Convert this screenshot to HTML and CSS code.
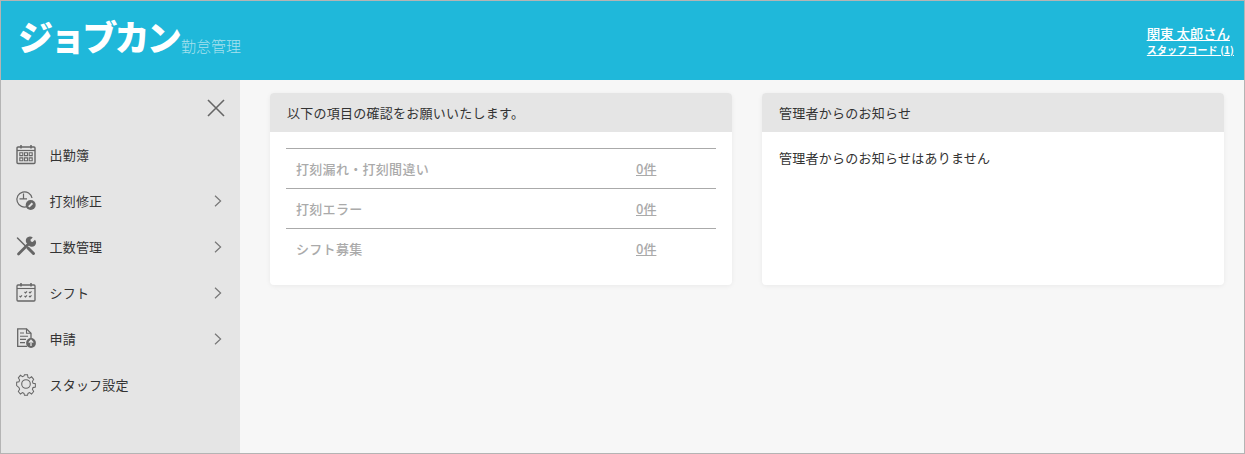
FILE: index.html
```html
<!DOCTYPE html>
<html lang="ja">
<head>
<meta charset="utf-8">
<title>ジョブカン勤怠管理</title>
<link rel="stylesheet" href="styles.css">
</head>
<body>
<div class="frame">
  <header class="topbar">
    <div class="brand"><span class="logo">ジョブカン</span><span class="product">勤怠管理</span></div>
    <div class="user">
      <a class="user-name" href="#">関東 太郎さん</a>
      <a class="user-code" href="#">スタッフコード (1)</a>
    </div>
  </header>
  <div class="body">
    <nav class="sidebar">
      <div class="close-row">
        <svg class="close" width="18" height="18" viewBox="0 0 18 18"><path d="M1 1L17 17M17 1L1 17" stroke="#666" stroke-width="1.6" fill="none"/></svg>
      </div>
      <ul class="menu">
        <li class="item">
          <svg class="icon" viewBox="0 0 20 20" fill="none" stroke="#666"><rect x="1" y="3" width="18" height="16.500" rx="1" stroke-width="1.400"/><path d="M1 6.500h18" stroke-width="1.200"/><path d="M5 1v3.500M15 1v3.500" stroke-width="1.500"/><path d="M3.800 8.800h3v2.800h-3zM8.500 8.800h3v2.800h-3zM13.200 8.800h3v2.800h-3zM3.800 13.900h3v2.800h-3zM8.500 13.900h3v2.800h-3zM13.200 13.900h3v2.800h-3z" stroke-width="1.100"/></svg>
          <span class="label">出勤簿</span>
        </li>
        <li class="item">
          <svg class="icon" viewBox="0 0 20 20" fill="none" stroke="#666"><path d="M11.500 16.400A7.600 7.600 0 1 1 16 8" stroke-width="1.200"/><path d="M7.500 3.500v5.300M3.500 8.800H11" stroke-width="1.200"/><circle cx="14.700" cy="15" r="5" fill="#666" stroke="none"/><path d="M12.800 16.900l3.600-3.600" stroke="#e5e5e5" stroke-width="2"/></svg>
          <span class="label">打刻修正</span>
          <svg class="chevron" width="8" height="12" viewBox="0 0 8 12"><path d="M1 .8L6.600 6 1 11.200" stroke="#777" stroke-width="1.200" fill="none"/></svg>
        </li>
        <li class="item">
          <svg class="icon" viewBox="0 0 20 20" fill="none" stroke="#666"><path d="M1.500 2L10 10.500" stroke-width="1.500" stroke-linecap="round"/><path d="M12 12L17.500 17.500" stroke-width="3" stroke-linecap="round"/><path d="M2.500 18L12 8.500" stroke-width="2.800" stroke-linecap="round"/><path d="M11.200 7.800A3.800 3.800 0 0 1 16.800 1.500l-2.400 2.300.5 1.600 1.700.5L19 3.700A3.800 3.800 0 0 1 12.800 9.400z" fill="#666" stroke="none"/></svg>
          <span class="label">工数管理</span>
          <svg class="chevron" width="8" height="12" viewBox="0 0 8 12"><path d="M1 .8L6.600 6 1 11.200" stroke="#777" stroke-width="1.200" fill="none"/></svg>
        </li>
        <li class="item">
          <svg class="icon" viewBox="0 0 20 20" fill="none" stroke="#666"><rect x="1" y="3" width="18" height="16" rx="1" stroke-width="1.300"/><path d="M1 6.500h18" stroke-width="1.100"/><path d="M5 1v3.500M15 1v3.500" stroke-width="1.500"/><path d="M8.500 10l1 1 1.500-1.600M13 10l1 1 1.500-1.600M3.500 14l1 1 1.500-1.600M8.500 14l1 1 1.500-1.600M13 14l1 1 1.500-1.600" stroke-width="1.100"/></svg>
          <span class="label">シフト</span>
          <svg class="chevron" width="8" height="12" viewBox="0 0 8 12"><path d="M1 .8L6.600 6 1 11.200" stroke="#777" stroke-width="1.200" fill="none"/></svg>
        </li>
        <li class="item">
          <svg class="icon" viewBox="0 0 20 20" fill="none" stroke="#666"><path d="M11 18.300H1.700V.8H10.500L15 5.300V10" stroke-width="1.300"/><path d="M10.500.8V5.300H15" stroke-width="1.100"/><path d="M4 5h4M4 8.200h8M4 11.400h6M4 14.600h5" stroke-width="1.100"/><circle cx="15" cy="15" r="4.900" fill="#666" stroke="none"/><path d="M15 18v-5.500M12.800 14.600L15 12.300l2.200 2.300" stroke="#e5e5e5" stroke-width="1.300"/></svg>
          <span class="label">申請</span>
          <svg class="chevron" width="8" height="12" viewBox="0 0 8 12"><path d="M1 .8L6.600 6 1 11.200" stroke="#777" stroke-width="1.200" fill="none"/></svg>
        </li>
        <li class="item">
          <svg class="icon" viewBox="0 0 20 20" fill="none" stroke="#666" stroke-width="1.100"><path d="M8.300.8h3.400l.5 2.600 1.700.8 2.300-1.400 2.300 2.500-1.400 2.200.7 1.700 2.600.5v3.400l-2.600.5-.7 1.700 1.400 2.200-2.300 2.500-2.300-1.400-1.700.8-.5 1.900H8.300l-.5-1.900-1.700-.8-2.300 1.400-2.300-2.500 1.400-2.200-.7-1.700L-.4 11.600V8.200l2.600-.5.700-1.700-1.400-2.200L3.800 1.300l2.300 1.400 1.700-.8z" transform="translate(1 0) scale(.9 1)"/><circle cx="10" cy="10" r="4.300"/></svg>
          <span class="label">スタッフ設定</span>
        </li>
      </ul>
    </nav>
    <main class="content">
      <section class="card">
        <h2 class="card-head">以下の項目の確認をお願いいたします。</h2>
        <div class="card-body checks">
          <div class="check"><span class="check-name">打刻漏れ・打刻間違い</span><a class="check-count" href="#">0件</a></div>
          <div class="check"><span class="check-name">打刻エラー</span><a class="check-count" href="#">0件</a></div>
          <div class="check"><span class="check-name">シフト募集</span><a class="check-count" href="#">0件</a></div>
        </div>
      </section>
      <section class="card">
        <h2 class="card-head">管理者からのお知らせ</h2>
        <div class="card-body notice">管理者からのお知らせはありません</div>
      </section>
    </main>
  </div>
</div>
</body>
</html>
```
FILE: styles.css
```css
* { box-sizing: border-box; }
html, body { margin: 0; height: 100%; }
body {
  font-family: "Noto Sans CJK JP", "Noto Sans", sans-serif;
  font-size: 13px;
  color: #333;
  overflow: hidden;
}
.frame {
  height: 454px;
  border: 1px solid #b4b4b4;
  display: flex;
  flex-direction: column;
  background: #f7f7f7;
}
.topbar {
  height: 79px;
  flex: none;
  background: #1fb8da;
  display: flex;
  justify-content: space-between;
  align-items: flex-start;
  color: #fff;
}
.brand {
  display: flex;
  align-items: flex-end;
  margin: 12px 0 0 17px;
}
.logo {
  font-size: 35px;
  font-weight: 900;
  line-height: 46px;
  letter-spacing: -2.800px;
  color: #fff;
}
.product {
  font-size: 15px;
  font-weight: 300;
  line-height: 20px;
  color: #a8e1ee;
  margin: 0 0 3px 2px;
}
.user {
  display: flex;
  flex-direction: column;
  align-items: flex-end;
  margin: 23px 10px 0 0;
}
.user a { color: #fff; text-decoration: underline; }
.user-name { font-size: 13.500px; font-weight: 500; line-height: 19px; margin-right: 4px; letter-spacing: -.1px; }
.user-code { font-size: 10px; font-weight: 700; line-height: 14px; letter-spacing: .13px; }
.body { flex: 1; display: flex; min-height: 0; }
.sidebar { width: 239px; flex: none; background: #e5e5e5; }
.close-row { display: flex; justify-content: flex-end; padding: 19px 15px 0 0; height: 51px; }
.close { display: block; }
.menu { list-style: none; margin: 0; padding: 0; }
.item {
  height: 46px;
  display: flex;
  align-items: center;
  padding-left: 15px;
}
.icon { width: 20px; height: 20px; flex: none; overflow: visible; }
.label { margin-left: 13.500px; font-size: 13px; color: #333; letter-spacing: .2px; }
.chevron { margin-left: auto; margin-right: 18px; margin-top: 2px; }
.content {
  flex: 1;
  display: flex;
  align-items: flex-start;
  gap: 30px;
  padding: 13px 20px 0 30px;
}
.card {
  flex: 1;
  height: 192px;
  background: #fff;
  border-radius: 4px;
  box-shadow: 0 1px 5px rgba(0,0,0,.06);
  overflow: hidden;
}
.card-head {
  margin: 0;
  height: 39px;
  background: #e5e5e5;
  font-size: 13px;
  font-weight: 400;
  line-height: 39px;
  padding-left: 17px;
  color: #333;
  letter-spacing: .25px;
}
.checks { padding: 16px 16px 0; }
.check {
  display: flex;
  height: 40px;
  align-items: center;
  border-top: 1px solid #aaa;
  padding-left: 10px;
}
.check-name { width: 340px; color: #aaa; font-weight: 500; letter-spacing: .3px; }
.check-count { color: #aaa; font-weight: 500; }
.notice { padding: 15px 17px; line-height: 22px; letter-spacing: .25px; }
```
